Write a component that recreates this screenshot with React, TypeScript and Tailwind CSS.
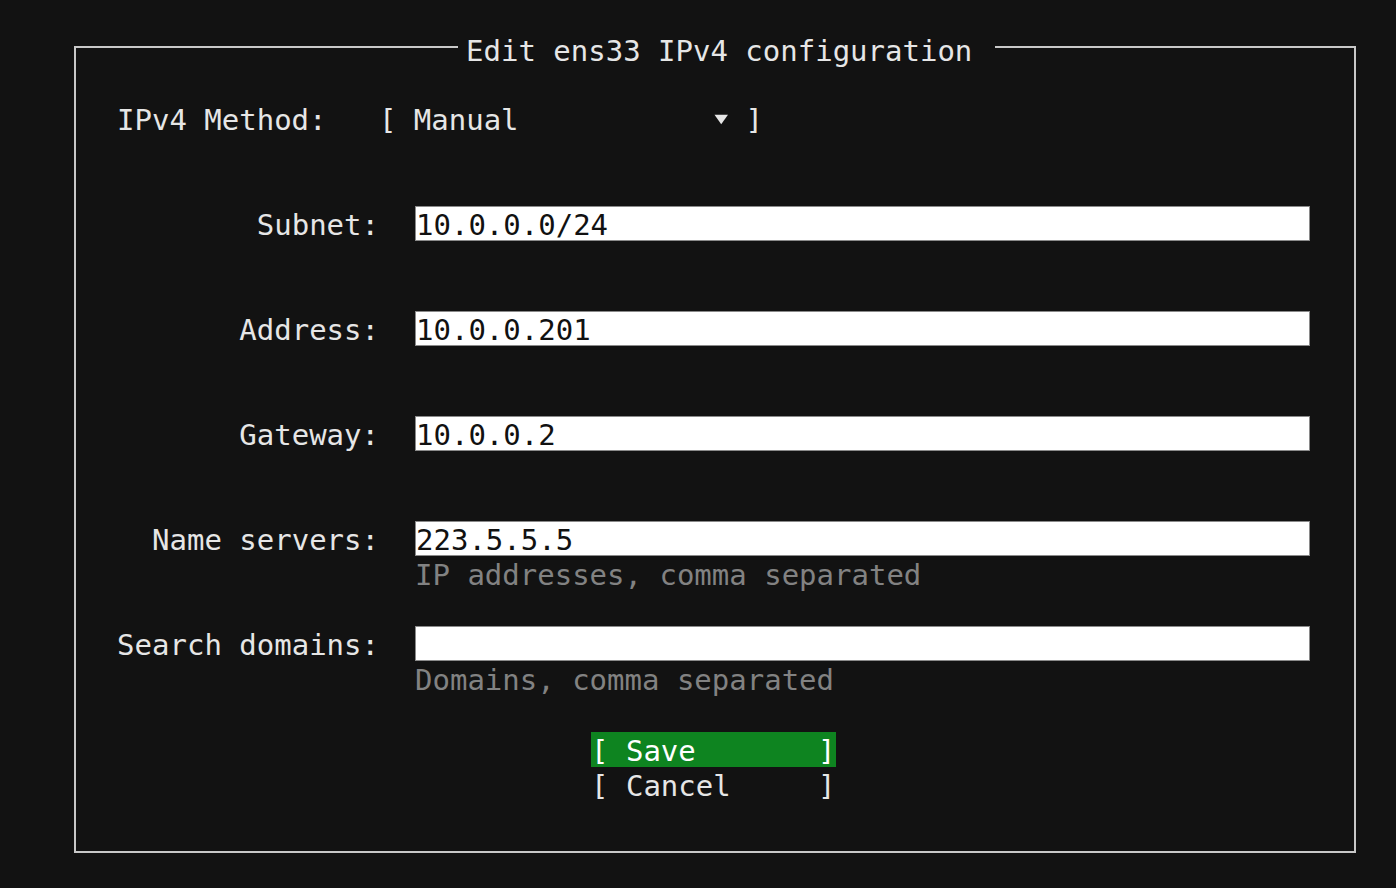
import React from "react";

const mono = { fontFamily: '"DejaVu Sans Mono", "Liberation Mono", monospace' };

function Field({ label, value, hint }: { label: string; value: string; hint?: string }) {
  return (
    <div className="flex flex-col">
      <div className="flex h-[35px] pl-[41px]">
        <div className="w-[262px] h-[35px] text-right leading-[39px] whitespace-pre text-[#e6e6e6]">{label}</div>
        <div className="ml-[36px] h-[35px] w-[895px] bg-white border border-[#8a8a8a] leading-[37px] text-[#111111] whitespace-pre overflow-hidden">
          {value}
        </div>
      </div>
      {hint ? (
        <div className="h-[35px] pl-[339px] leading-[39px] text-[#828282] whitespace-pre">{hint}</div>
      ) : null}
    </div>
  );
}

export default function App() {
  return (
    <div
      className="w-[1396px] h-[888px] bg-[#121212] pt-[46px] pl-[74px] text-[29px] text-[#e6e6e6] overflow-hidden"
      style={mono}
    >
      <div className="relative w-[1282px] h-[807px] border-2 border-[#c8c8c8] flex flex-col">
        <div className="absolute left-[382px] top-[-15px] h-[35px] bg-[#121212] pl-[8px] pr-[23px] leading-[37px] whitespace-pre text-[#e6e6e6]">
          Edit ens33 IPv4 configuration
        </div>

        <div className="flex flex-col pt-[55px]">
          <div className="h-[35px] pl-[41px] leading-[35px] whitespace-pre flex items-center">
            <span>{"IPv4 Method:   [ Manual           "}</span>
            <span className="inline-flex w-[17.46px] h-[35px] items-center">
              <svg width="15" height="11" viewBox="0 0 15 11" className="ml-[3px] mt-[-3px]">
                <polygon points="0.5,0.5 14.5,0.5 7.5,10.5" fill="#e6e6e6" />
              </svg>
            </span>
            <span>{" ]"}</span>
          </div>

          <div className="mt-[68px]">
            <Field label="Subnet:" value="10.0.0.0/24" />
          </div>
          <div className="mt-[70px]">
            <Field label="Address:" value="10.0.0.201" />
          </div>
          <div className="mt-[70px]">
            <Field label="Gateway:" value="10.0.0.2" />
          </div>
          <div className="mt-[70px]">
            <Field label="Name servers:" value="223.5.5.5" hint="IP addresses, comma separated" />
          </div>
          <div className="mt-[35px]">
            <Field label="Search domains:" value="" hint="Domains, comma separated" />
          </div>

          <div className="mt-[36px] ml-[515px] flex flex-col">
            <div className="w-[245px] h-[35px] bg-[#0e8420] text-white leading-[39px] whitespace-pre">
              {"[ Save       ]"}
            </div>
            <div className="w-[245px] h-[35px] text-[#e6e6e6] leading-[39px] whitespace-pre">
              {"[ Cancel     ]"}
            </div>
          </div>
        </div>
      </div>
    </div>
  );
}
